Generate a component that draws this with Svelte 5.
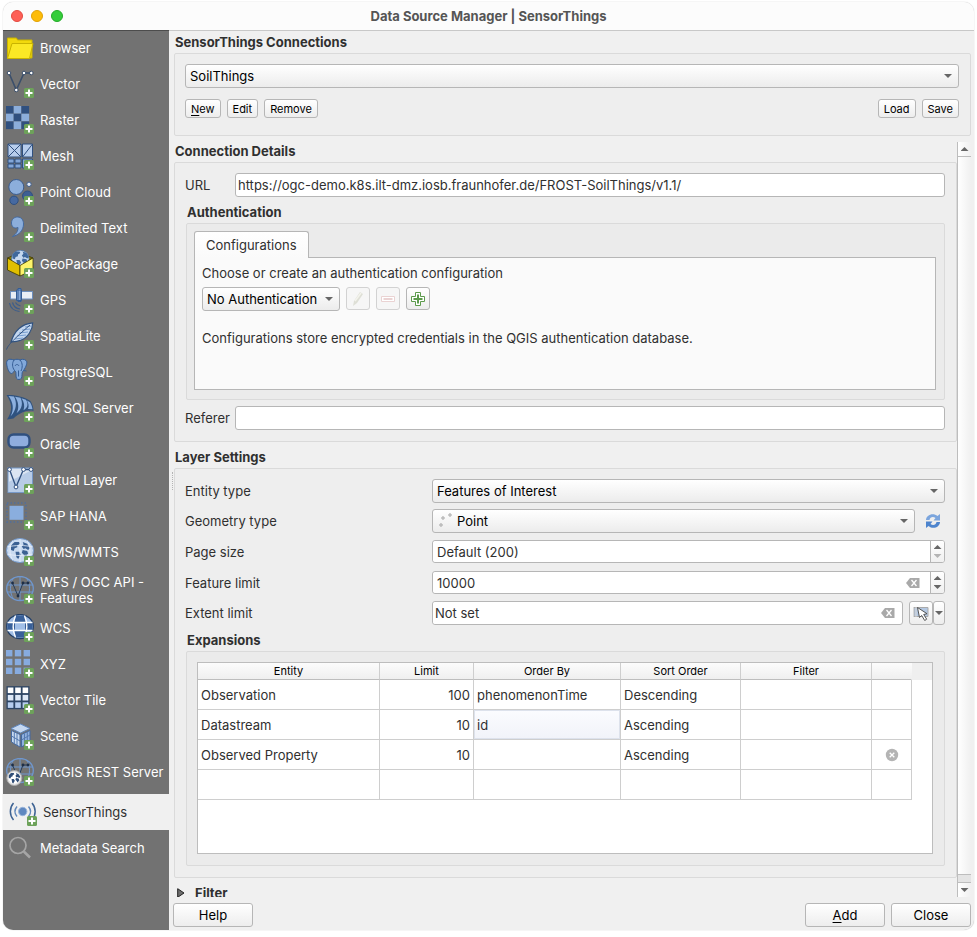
<script>
    const sources = [
        {label: 'Browser', icon: 'browser', plain: true},
        {label: 'Vector', icon: 'vector'},
        {label: 'Raster', icon: 'raster'},
        {label: 'Mesh', icon: 'mesh'},
        {label: 'Point Cloud', icon: 'points'},
        {label: 'Delimited Text', icon: 'comma'},
        {label: 'GeoPackage', icon: 'geopackage'},
        {label: 'GPS', icon: 'gps'},
        {label: 'SpatiaLite', icon: 'feather'},
        {label: 'PostgreSQL', icon: 'postgres'},
        {label: 'MS SQL Server', icon: 'mssql'},
        {label: 'Oracle', icon: 'oracle'},
        {label: 'Virtual Layer', icon: 'virtual'},
        {label: 'SAP HANA', icon: 'hana'},
        {label: 'WMS/WMTS', icon: 'wms'},
        {label: 'WFS / OGC API - Features', icon: 'wfs'},
        {label: 'WCS', icon: 'wcs'},
        {label: 'XYZ', icon: 'xyz'},
        {label: 'Vector Tile', icon: 'tile'},
        {label: 'Scene', icon: 'scene'},
        {label: 'ArcGIS REST Server', icon: 'arcgis'},
        {label: 'SensorThings', icon: 'sensor'},
        {label: 'Metadata Search', icon: 'search', plain: true}
    ]

    const expansions = [
        {entity: 'Observation', limit: 100, orderBy: 'phenomenonTime', sort: 'Descending'},
        {entity: 'Datastream', limit: 10, orderBy: 'id', sort: 'Ascending'},
        {entity: 'Observed Property', limit: 10, orderBy: '', sort: 'Ascending', removable: true},
        {entity: '', limit: '', orderBy: '', sort: ''}
    ]

    const thirds = [0, 1, 2]

    let current = $state('SensorThings')
    let url = $state('https://ogc-demo.k8s.ilt-dmz.iosb.fraunhofer.de/FROST-SoilThings/v1.1/')
    let referer = $state('')
    let pageSize = $state('Default (200)')
    let featureLimit = $state('10000')
    let extent = $state('Not set')
    let editing = $state('Datastream')

    function stepLimit(delta) {
        featureLimit = String(Math.max(0, (parseInt(featureLimit) || 0) + delta))
    }
</script>

{#snippet land(cx, cy, s)}
    <g transform="translate({cx} {cy}) scale({s})">
        <path d="M-10 -5l4 -4l5 0l1 2l-3 2l0 2l-3 1l-1 3l-3 -1zM-5 2l4 0l2 3l-3 5l-2 -2zM3 -9l5 2l3 5l-2 2l-3 -2l-2 1l-2 -3l2 -2zM3 0l5 1l1 3l-3 4l-2 -3l-2 -2z"/>
    </g>
{/snippet}

{#snippet sourceIcon(name)}
    {#if name === 'browser'}
        <path d="M1.500 24V4h9l1 2H26v18z" fill="#f2d90d" stroke="#c9b300"/>
        <path d="M1.500 24.500L6 9.500h21L23.500 24.500z" fill="#fbe825" stroke="#c9b300"/>
    {:else if name === 'vector'}
        <path d="M3 3L10.300 20L18 3h7.500" fill="none" stroke="#3b4f6b" stroke-width="1.600"/>
        {#each [[3, 3], [10.3, 20], [18, 3], [25.3, 3]] as [x, y]}
            <circle cx={x} cy={y} r="1.800" fill="#fff" stroke="#3b4f6b"/>
        {/each}
    {:else if name === 'raster'}
        {#each thirds as row}
            {#each thirds as col}
                <rect x={col * 7.7} y={row * 7.7} width="7.700" height="7.700" fill={(row + col) % 2 ? '#8caedb' : '#30507f'}/>
            {/each}
        {/each}
    {:else if name === 'mesh'}
        <g fill="#b7cdec" stroke="#30507f">
            <path d="M2 2h13v13H2zM2 2l13 13M15 2L2 15M16.500 2H26.500v13h-10zM26.500 2l-10 13"/>
            <path d="M2 17h6v4H2zM9 17h6v4H9zM2 22h6v4H2zM9 22h6v4H9zM16.500 17h10v9h-10z" fill="#82a6d8"/>
        </g>
    {:else if name === 'points'}
        <circle cx="21.500" cy="18" r="5" fill="#3d5f93" stroke="#30507f"/>
        <circle cx="10.300" cy="9" r="7.500" fill="#8caedb" stroke="#3b5c8e"/>
        <circle cx="23" cy="6.300" r="2.200" fill="#e4ecf7" stroke="#3b5c8e"/>
        <circle cx="8" cy="22.300" r="4.200" fill="#4669a0" stroke="#30507f"/>
    {:else if name === 'comma'}
        <path d="M6.500 22.500c4-2.500 5.500-5.500 5.500-9-3.500 1.500-6.500-.5-6.500-4.500 0-4 3-6 6-6 4 0 6 3 6 7 0 6-4 11-11 12.500z" fill="#8caedb" stroke="#43699f"/>
    {:else if name === 'geopackage'}
        <path d="M1.500 8L6 6h16l5 2-13 6z" fill="#8d7c00" stroke="#3d3800" stroke-width=".8"/>
        <circle cx="14.300" cy="9" r="8.800" fill="#c5d8ef" stroke="#4e79ae" stroke-width=".8"/>
        <g fill="#3f689b">{@render land(14.3, 8.5, .78)}</g>
        <path d="M1.500 8L14 15.500V26L1.500 20z" fill="#e0bf00" stroke="#3d3800" stroke-width=".8"/>
        <path d="M14 15.500L27 8v12L14 26z" fill="#fdf36b" stroke="#3d3800" stroke-width=".8"/>
    {:else if name === 'gps'}
        <path d="M3.500 17c1 5 4.500 8 10 8.500M6.500 16.500c1 4 3.500 6 7.500 6.500M9.500 16.500c1 2 2.500 3 5 3.500" fill="none" stroke="#3c5d8b" stroke-width="1.200"/>
        <path d="M4.500 5.500h6v7.500h-6zM15 5.500h11.500v7.500H15z" fill="#e9eef5" stroke="#6d8fbe"/>
        <path d="M10.500 4h5v10.500h-5zM12 2.500h3v13h-3z" fill="#89abda" stroke="#355d95"/>
    {:else if name === 'feather'}
        <path d="M5 20C8 10 15 2 26.700.8c0 7-5 15-12 17.500-4 1.500-6 1.500-9.700 1.700z" fill="#c4d7ef" stroke="#31527f" stroke-width="1.200"/>
        <path d="M9 17l8-1M11 14l9-1M13 11l9-1M16 8l8-1M19 5l6-1" stroke="#769dd0" fill="none"/>
        <path d="M.5 27.500C2 23 8 17 24 3" fill="none" stroke="#31527f"/>
    {:else if name === 'postgres'}
        <path d="M8 2C4 .5 0 1 .7 6c.5 5 3 10 5 9.500 1 0 2-2 2.800-3 1.500 1 1.500 2 1.500 4.500 0 3 .5 4.500 3 4.500s3-2 3-5c0-2 .5-3 1.500-4C20 9 22 4 20 2.500 18 .5 15 1.500 14 2c-2-1-4-1-6 0z" fill="#82a8d9" stroke="#355d95"/>
        <path d="M8 2C6 5 6 9 8.500 12.500M14 2c3 3 2.500 8 1 11M9 8c1-2 3-2 4 0M12.500 12.500v6M17.500 12.500l3 .5" fill="none" stroke="#355d95"/>
    {:else if name === 'mssql'}
        <path d="M.5 1c9-.5 18 2 24 6 2 3 3 7 3 10-6-1.500-13 1.500-20 7.500L1 25.500C7 17 6 9 .5 1z" fill="#2f527f"/>
        <path d="M2.500 2l5.500.5c3 6 3 13-3.500 20C8.500 15 7 8 2.500 2zM9 2.800l5.500 1c2.500 5 2 11-4 15.500C13.500 14 12.500 8 9 2.800zM15.500 4.300l4.500 1.500c2.500 4 2 8-2.500 10.500C19 12 18 8 15.500 4.300zM21 6.500l3 1.800c1.500 2.200 2.200 4.500 2.500 7L22 15c1.200-3 .5-5.500-1-8.500z" fill="#8cb0df"/>
    {:else if name === 'oracle'}
        <rect x="2.500" y="4.500" width="21" height="13" rx="5" fill="#8fadde" stroke="#30507f" stroke-width="2.400"/>
    {:else if name === 'virtual'}
        <rect x="2" y="2" width="24.500" height="24.500" fill="#dbe5f2" stroke="#7799c8"/>
        <path d="M2.500 26V16L26 4v22z" fill="#a9c2e3" opacity=".7"/>
        <path d="M3.500 3.500L10 21 17.500 3.500h7.500" fill="none" stroke="#30507f" stroke-width="1.300"/>
        {#each [[3.5, 3.5], [10, 21], [17.5, 3.5], [25, 3.5]] as [x, y]}
            <circle cx={x} cy={y} r="1.900" fill="#fff" stroke="#30507f"/>
        {/each}
    {:else if name === 'hana'}
        <path d="M1 1h19v19H1z" fill="none" stroke="#506f9d" stroke-width="1.500" stroke-dasharray="1.5 2"/>
        <rect x="3.500" y="3.800" width="14" height="14" fill="#8aaede"/>
    {:else if name === 'wms'}
        <ellipse cx="14" cy="12.500" rx="13.500" ry="12" fill="#c9daf0" stroke="#7399cb"/>
        <g fill="#3b6193">{@render land(14, 12, .9)}</g>
        <path d="M1 9c8-2 18-2 26 0M1 16c8 2 18 2 26 0M14 1v23M7 2.500c-4 6-4 14 0 20M21 2.500c4 6 4 14 0 20" fill="none" stroke="#e6eef9" stroke-width=".8"/>
    {:else if name === 'wfs' || name === 'arcgis'}
        <g fill="none" stroke="#6f97ce">
            <ellipse cx="14" cy="12.500" rx="13.300" ry="12" stroke-width="1.300"/>
            <path d="M14 .5v24M1 9h26M1 16h26M7.500 2c-4 6-4 15 0 21M20.500 2c4 6 4 15 0 21"/>
        </g>
        <path d="M6.500 7l5.500 13 5-13h5" fill="none" stroke="#263c5a"/>
        {#each [[6.5, 7], [12, 20], [17, 7], [22, 7]] as [x, y]}
            <circle cx={x} cy={y} r="1.400" fill="#1d2e47"/>
        {/each}
        {#if name === 'arcgis'}
            <circle cx="8.300" cy="20" r="7.500" fill="#e4e4e4" stroke="#aaa"/>
            <circle cx="8.300" cy="20" r="5.700" fill="#fff"/>
            <g fill="#2f4d77">{@render land(8.3, 20, .55)}</g>
        {/if}
    {:else if name === 'wcs'}
        <ellipse cx="14" cy="12.500" rx="13.300" ry="12" fill="#a2bfe7" stroke="#233f66" stroke-width="1.300"/>
        <path d="M1.500 9h7.500v7H1.500zM19 9h7.500v7H19zM10 1.500h8L19.500 8h-11zM8.500 17h11L18 23.500h-8z" fill="#396099"/>
        <path d="M1.500 8.500h25M1.500 16.500h25M9.500 1.500c-3 7-3 15 0 22M18.500 1.500c3 7 3 15 0 22" fill="none" stroke="#fff" stroke-width="1.300"/>
    {:else if name === 'xyz'}
        {#each thirds as row}
            {#each thirds as col}
                <rect x={col * 8.8} y={row * 8.8} width="6.400" height="6.400" fill="#87abdf"/>
            {/each}
        {/each}
    {:else if name === 'tile'}
        <rect x=".5" y=".2" width="23" height="23" fill="#2d4564"/>
        {#each thirds as row}
            {#each thirds as col}
                <rect x={1.8 + col * 7.4} y={1.5 + row * 7.4} width="5.600" height="5.600" fill={['#fff', '#dde8f7', '#b6cdee'][row]}/>
            {/each}
        {/each}
    {:else if name === 'scene'}
        <path d="M5 6.500L14.500 2 24 6.500 14.500 11z" fill="#c5d8f1" stroke="#5e87bf"/>
        <path d="M5.500 8.500l8.500 4V25l-8.500-5z" fill="#c7d9f0" stroke="#44699f"/>
        <path d="M15.500 12.500l8.500-4V20l-8.500 5z" fill="#8fb0de" stroke="#44699f"/>
        <path d="M8.300 10v11.500M11 11v12.500M5.500 14l8.500 5M18.500 11.500V23M21.300 10v11.500M15.500 18l8.500-5" stroke="#557ab0" fill="none"/>
    {:else if name === 'sensor'}
        <circle cx="13.700" cy="13.500" r="4.200" fill="#5f88c0" stroke="#9ab6dc"/>
        <g fill="none" stroke="#3f6494" stroke-width="1.500">
            <path d="M8 8.500c-2.500 3-2.500 7 0 10M19.500 8.500c2.500 3 2.500 7 0 10" stroke="#6389bb"/>
            <path d="M4.500 5C.3 10 .3 17 4.500 22M23 5c4.200 5 4.200 12 0 17"/>
        </g>
    {:else if name === 'search'}
        <g fill="none" stroke="#a5a5a5">
            <circle cx="12" cy="11.500" r="8" stroke-width="1.700"/>
            <path d="M17.800 17.500L24 23.500" stroke-width="2.600"/>
        </g>
    {/if}
{/snippet}

{#snippet eraser()}
    <svg width="14" height="10" viewBox="0 0 14 10" aria-hidden="true">
        <path d="M0 5l4-5h9.500v10H4z" fill="#a9a9a9"/>
        <path d="M5.500 2l5 6M10.500 2l-5 6" stroke="#fff" stroke-width="1.300"/>
    </svg>
{/snippet}

<div class="desktop">
    <div class="window">
        <header class="titlebar">
            <div class="lights">
                <button type="button" class="light red" aria-label="Close window"></button>
                <button type="button" class="light yellow" aria-label="Minimize"></button>
                <button type="button" class="light green" aria-label="Zoom"></button>
            </div>
            <h1>Data Source Manager | SensorThings</h1>
        </header>

        <div class="body">
            <nav>
                {#each sources as source}
                    <button type="button" class="source" class:selected={current === source.label}
                            onclick={() => current = source.label}>
                        <svg width="28" height="28" viewBox="0 0 28 28" aria-hidden="true">
                            {@render sourceIcon(source.icon)}
                            {#if !source.plain}
                                <rect x="18" y="18" width="10" height="10" rx="1.500" fill="#6da25a"/>
                                <path d="M23 19.500v7M19.500 23h7" stroke="#fff" stroke-width="2"/>
                            {/if}
                        </svg>
                        <span>{source.label}</span>
                    </button>
                {/each}
            </nav>

            <div class="content">
                <div class="splitter"><i></i></div>

                <main>
                    <section>
                        <h2>SensorThings Connections</h2>
                        <div class="group connections">
                            <div class="combo">
                                <select aria-label="Connection">
                                    <option>SoilThings</option>
                                </select>
                            </div>
                            <div class="actions">
                                <button type="button" class="btn small"><u>N</u>ew</button>
                                <button type="button" class="btn small">Edit</button>
                                <button type="button" class="btn small">Remove</button>
                                <span class="spacer"></span>
                                <button type="button" class="btn small">Load</button>
                                <button type="button" class="btn small">Save</button>
                            </div>
                        </div>
                    </section>

                    <div class="scroll">
                        <div class="view">
                            <section>
                                <h2>Connection Details</h2>
                                <div class="group">
                                    <div class="line">
                                        <label for="url">URL</label>
                                        <input id="url" type="text" bind:value={url}>
                                    </div>

                                    <div class="nested">
                                        <h3>Authentication</h3>
                                        <div class="group auth">
                                            <button type="button" class="tab">Configurations</button>
                                            <div class="panel">
                                                <label for="config">Choose or create an authentication configuration</label>
                                                <div class="config">
                                                    <div class="combo compact">
                                                        <select id="config">
                                                            <option>No Authentication</option>
                                                        </select>
                                                    </div>
                                                    <button type="button" class="btn tool" disabled aria-label="Edit configuration">
                                                        <svg width="16" height="16" viewBox="0 0 16 16">
                                                            <path d="M3 15l1-5 6-9 3 2-6 9z" fill="#dedfd6"/>
                                                            <path d="M5 10l6-8" stroke="#f3f3ec" stroke-width="1.500"/>
                                                        </svg>
                                                    </button>
                                                    <button type="button" class="btn tool" disabled aria-label="Remove configuration">
                                                        <svg width="16" height="16" viewBox="0 0 16 16">
                                                            <path d="M1.500 5.500h13v5h-13z" fill="#fff" stroke="#ead3d3"/>
                                                            <path d="M3.500 8h9" stroke="#ead3d3" stroke-width="2"/>
                                                        </svg>
                                                    </button>
                                                    <button type="button" class="btn tool" aria-label="Add configuration">
                                                        <svg width="16" height="16" viewBox="0 0 16 16">
                                                            <path d="M5.500 1.500h5v4h4v5h-4v4h-5v-4h-4v-5h4z" fill="#fff" stroke="#5c9a4b"/>
                                                            <path d="M8 3.500v9M3.500 8h9" stroke="#5c9a4b" stroke-width="2"/>
                                                        </svg>
                                                    </button>
                                                </div>
                                                <p>Configurations store encrypted credentials in the QGIS authentication database.</p>
                                            </div>
                                        </div>
                                    </div>

                                    <div class="line">
                                        <label for="referer">Referer</label>
                                        <input id="referer" type="text" bind:value={referer}>
                                    </div>
                                </div>
                            </section>

                            <section>
                                <h2>Layer Settings</h2>
                                <div class="group">
                                    <div class="settings">
                                        <label for="entity">Entity type</label>
                                        <div class="combo">
                                            <select id="entity">
                                                <option>Features of Interest</option>
                                            </select>
                                        </div>

                                        <label for="geometry">Geometry type</label>
                                        <div class="field">
                                            <div class="combo with-icon">
                                                <select id="geometry">
                                                    <option>Point</option>
                                                </select>
                                                <svg width="16" height="16" viewBox="0 0 16 16" fill="#fff" stroke="#8a8a8a" stroke-width=".8" aria-hidden="true">
                                                    <circle cx="3" cy="12" r="1.200"/>
                                                    <circle cx="5" cy="5" r="1.200"/>
                                                    <circle cx="12" cy="2" r="1.200"/>
                                                </svg>
                                            </div>
                                            <button type="button" class="refresh" aria-label="Refresh">
                                                <svg width="16" height="16" viewBox="0 0 16 16">
                                                    <path d="M1 7C1 2 8-1 12.500 3L15 1v6.500H8.500L10.500 5C8 3 5 4 4.500 7z" fill="#7ba5dd"/>
                                                    <path d="M15 9c0 5-7 8-11.500 4L1 15V8.500h6.500L5.500 11C8 13 11 12 11.500 9z" fill="#4d84cd"/>
                                                </svg>
                                            </button>
                                        </div>

                                        <label for="page-size">Page size</label>
                                        <div class="spin">
                                            <input id="page-size" type="text" bind:value={pageSize}>
                                            <div class="steps">
                                                <button type="button" class="up" aria-label="Increase"></button>
                                                <button type="button" class="down" disabled aria-label="Decrease"></button>
                                            </div>
                                        </div>

                                        <label for="feature-limit">Feature limit</label>
                                        <div class="spin">
                                            <input id="feature-limit" type="text" bind:value={featureLimit}>
                                            <button type="button" class="clear" aria-label="Clear feature limit" onclick={() => featureLimit = ''}>
                                                {@render eraser()}
                                            </button>
                                            <div class="steps">
                                                <button type="button" class="up" aria-label="Increase" onclick={() => stepLimit(1)}></button>
                                                <button type="button" class="down" aria-label="Decrease" onclick={() => stepLimit(-1)}></button>
                                            </div>
                                        </div>

                                        <label for="extent">Extent limit</label>
                                        <div class="field">
                                            <div class="clearable">
                                                <input id="extent" type="text" bind:value={extent}>
                                                <button type="button" class="clear" aria-label="Clear extent" onclick={() => extent = ''}>
                                                    {@render eraser()}
                                                </button>
                                            </div>
                                            <div class="split">
                                                <button type="button" class="btn tool tall" aria-label="Set extent">
                                                    <svg width="16" height="16" viewBox="0 0 16 16">
                                                        <path d="M1 2.500h14v9H1z" fill="#b4c8e2" stroke="#aaa"/>
                                                        <path d="M.5 2v10M3 2v10" stroke="#d8d8d8"/>
                                                        <path d="M4.500 2.500l2 10 2.200-2 3 5 2-1.300-3-4.700 3.300-.8z" fill="#fff" stroke="#444" stroke-width=".9"/>
                                                    </svg>
                                                </button>
                                                <button type="button" class="btn drop" aria-label="Extent options"></button>
                                            </div>
                                        </div>
                                    </div>

                                    <div class="nested">
                                        <h3>Expansions</h3>
                                        <div class="group">
                                            <div class="table-view">
                                                <table>
                                                    <colgroup>
                                                        <col class="c-entity"><col class="c-limit"><col class="c-order">
                                                        <col class="c-sort"><col class="c-filter"><col class="c-remove"><col>
                                                    </colgroup>
                                                    <thead>
                                                        <tr>
                                                            <th>Entity</th>
                                                            <th>Limit</th>
                                                            <th>Order By</th>
                                                            <th>Sort Order</th>
                                                            <th>Filter</th>
                                                            <th class="last"></th>
                                                            <th class="rest"></th>
                                                        </tr>
                                                    </thead>
                                                    <tbody>
                                                        {#each expansions as row}
                                                            <tr>
                                                                <td>{row.entity}</td>
                                                                <td class="number">{row.limit}</td>
                                                                <td class:editing={row.entity === editing}>{row.orderBy}</td>
                                                                <td>{row.sort}</td>
                                                                <td></td>
                                                                <td class="remove">
                                                                    {#if row.removable}
                                                                        <button type="button" aria-label="Remove expansion">
                                                                            <svg width="14" height="14" viewBox="0 0 14 14">
                                                                                <circle cx="7" cy="7" r="6.200" fill="#b4b4b4"/>
                                                                                <path d="M4.700 4.700l4.600 4.600M9.300 4.700L4.700 9.300" stroke="#fff" stroke-width="1.300"/>
                                                                            </svg>
                                                                        </button>
                                                                    {/if}
                                                                </td>
                                                                <td class="rest"></td>
                                                            </tr>
                                                        {/each}
                                                    </tbody>
                                                </table>
                                            </div>
                                        </div>
                                    </div>
                                </div>
                            </section>

                            <button type="button" class="disclosure">
                                <svg width="8" height="10" viewBox="0 0 8 10" aria-hidden="true">
                                    <path d="M.7 .7v8.600L7 5z" fill="#6e6e6e" stroke="#222"/>
                                </svg>
                                Filter
                            </button>
                        </div>

                        <div class="scrollbar">
                            <button type="button" class="up" aria-label="Scroll up"></button>
                            <div class="handle"></div>
                            <div class="groove"></div>
                            <button type="button" class="down" aria-label="Scroll down"></button>
                        </div>
                    </div>

                    <footer>
                        <button type="button" class="btn">Help</button>
                        <span class="spacer"></span>
                        <button type="button" class="btn"><u>A</u>dd</button>
                        <button type="button" class="btn">Close</button>
                    </footer>
                </main>
            </div>
        </div>
    </div>
</div>

<style>
    :global(body) {
        background: #fff;
    }

    .desktop, .desktop * {
        box-sizing: border-box;
    }

    .desktop {
        height: 100vh;
        padding: 2px 3px 7px;
        font: 13px/16px Inter, "Liberation Sans", sans-serif;
        color: #303030;
    }

    button, input, select {
        margin: 0;
        padding: 0;
        border: 0;
        background: none;
        font: inherit;
        color: inherit;
        outline: none;
        appearance: none;
    }

    h1, h2, h3, p {
        margin: 0;
        font-size: 13px;
        line-height: 16px;
    }

    .window {
        height: 100%;
        display: flex;
        flex-direction: column;
        overflow: hidden;
        border-radius: 10px;
        background: #f0f0f0;
        box-shadow: 0 0 1px rgba(0, 0, 0, 0.35);
    }

    .titlebar {
        flex: none;
        display: grid;
        grid-template-columns: 1fr auto 1fr;
        align-items: center;
        height: 28px;
        padding: 0 8px;
        background: #fcfcfc;
    }

    .titlebar h1 {
        color: #555;
        font-weight: 700;
    }

    .lights {
        display: flex;
        gap: 8px;
    }

    .light {
        width: 12px;
        height: 12px;
        border-radius: 50%;
    }

    .red {
        background: #fe6057;
        border: 1px solid #e24b41;
    }

    .yellow {
        background: #fdbc08;
        border: 1px solid #e0a106;
    }

    .green {
        background: #35cd3b;
        border: 1px solid #24ab28;
    }

    .body {
        flex: 1;
        min-height: 0;
        display: flex;
    }

    .content {
        flex: 1;
        min-width: 0;
        display: flex;
        border-top: 1px solid #c8c8c8;
    }

    nav {
        flex: none;
        width: 166px;
        background: #727272;
        box-shadow: inset 0 1px #4c4c4c;
    }

    .source {
        display: flex;
        align-items: center;
        gap: 6px;
        width: 100%;
        min-height: 36px;
        padding: 0 3px;
        color: #fff;
        text-align: left;
    }

    .source svg {
        flex: none;
    }

    .source.selected {
        margin-top: 4px;
        padding-left: 6px;
        background: #f0f0f0;
        color: #303030;
    }

    .source:nth-child(16) {
        min-height: 40px;
    }

    .splitter {
        flex: none;
        display: flex;
        align-items: center;
        justify-content: flex-end;
        width: 4px;
    }

    .splitter i {
        height: 18px;
        border-left: 1px dotted #b4b4b4;
    }

    main {
        flex: 1;
        min-width: 0;
        display: flex;
        flex-direction: column;
        gap: 6px;
        padding: 3px 3px 3px 0;
    }

    section {
        padding-left: 1px;
    }

    h2, h3 {
        padding: 0 1px;
        margin-bottom: 3px;
        font-weight: 700;
    }

    .group {
        padding: 10px 11px 11px 10px;
        border: 1px solid #dadada;
        border-radius: 2px;
        background: #eee;
    }

    .connections {
        padding-bottom: 17px;
    }

    .combo {
        display: grid;
        align-items: center;
    }

    .combo::after {
        content: "";
        grid-area: 1 / 1;
        justify-self: end;
        width: 8px;
        height: 4px;
        margin-right: 7px;
        background: #666;
        clip-path: polygon(0 0, 100% 0, 50% 100%);
        pointer-events: none;
    }

    .combo select {
        grid-area: 1 / 1;
        width: 100%;
        height: 24px;
        padding: 0 24px 0 4px;
        border: 1px solid #b6b6b6;
        border-radius: 3px;
        background: linear-gradient(#fff, #ececec);
        color: #000;
    }

    .combo.compact select {
        padding-right: 21px;
    }

    .combo svg {
        grid-area: 1 / 1;
        margin-left: 6px;
        pointer-events: none;
    }

    .combo.with-icon select {
        padding-left: 24px;
    }

    .actions, footer {
        display: flex;
        gap: 6px;
    }

    .actions {
        margin-top: 11px;
    }

    .spacer {
        flex: 1;
    }

    .btn {
        min-width: 80px;
        height: 24px;
        border: 1px solid #b6b6b6;
        border-radius: 3px;
        background: linear-gradient(#fff, #ededed);
        color: #000;
    }

    .btn u {
        text-underline-offset: 2px;
    }

    .btn.small {
        min-width: 0;
        height: 19px;
        padding: 0 5px;
        font-size: 11px;
        line-height: 16px;
    }

    .btn.tool {
        display: grid;
        place-items: center;
        min-width: 0;
        width: 24px;
        height: 23px;
    }

    .btn.tall {
        height: 24px;
    }

    .btn.tool:disabled {
        border-color: #d2d2d2;
        background: #f6f6f6;
    }

    .scroll {
        flex: 1;
        min-height: 0;
        display: flex;
    }

    .view {
        flex: 1;
        min-width: 0;
        overflow: hidden;
        padding-top: 1px;
    }

    .view section {
        margin-bottom: 7px;
    }

    .line {
        display: grid;
        grid-template-columns: 50px 1fr;
        align-items: center;
    }

    input {
        width: 100%;
        height: 24px;
        padding: 0 2px;
        border: 1px solid #b6b6b6;
        border-radius: 3px;
        background: #fff;
    }

    .nested {
        margin: 7px 0 0 1px;
    }

    .nested + .line {
        margin-top: 6px;
    }

    .nested .group {
        background: #ebebeb;
    }

    .nested .auth {
        padding: 7px 8px 9px 7px;
    }

    .tab {
        display: block;
        position: relative;
        height: 27px;
        padding: 0 11px;
        border: 1px solid #b6b6b6;
        border-bottom: 0;
        border-radius: 3px 3px 0 0;
        background: linear-gradient(#fff, #fafafa);
    }

    .panel {
        min-height: 133px;
        margin-top: -1px;
        padding: 7px;
        border: 1px solid #b6b6b6;
        background: #fafafa;
    }

    .panel label {
        display: block;
    }

    .config {
        display: flex;
        gap: 6px;
        margin: 6px 0 19px;
    }

    .settings {
        display: grid;
        grid-template-columns: 241px 1fr;
        align-items: center;
        gap: 6px;
    }

    .field {
        display: flex;
        gap: 6px;
    }

    .field .combo {
        flex: 1;
    }

    .refresh {
        display: grid;
        place-items: center;
        width: 24px;
    }

    .spin {
        display: flex;
        align-items: center;
        height: 23px;
        margin: 1px 0;
        border: 1px solid #b6b6b6;
        border-radius: 3px;
        background: #fff;
        overflow: hidden;
    }

    .spin input {
        flex: 1;
        height: 21px;
        padding: 0 4px;
        border: 0;
    }

    .clear {
        display: grid;
        place-items: center;
        width: 14px;
        height: 16px;
    }

    .spin .clear {
        margin-right: 10px;
    }

    .steps {
        flex: none;
        display: flex;
        flex-direction: column;
        justify-content: center;
        width: 14px;
        height: 21px;
        border-left: 1px solid #b6b6b6;
        background: linear-gradient(#fff, #f0f0f0);
    }

    .steps button, .scrollbar button, .drop {
        display: grid;
        place-items: center;
    }

    .steps button {
        height: 9px;
    }

    .up::before, .down::before, .drop::before {
        content: "";
        width: 8px;
        height: 4px;
        background: #666;
        clip-path: polygon(0 0, 100% 0, 50% 100%);
    }

    .up::before {
        clip-path: polygon(0 100%, 100% 100%, 50% 0);
    }

    .down:disabled::before {
        background: #b4b4b4;
    }

    .clearable {
        flex: 1;
        display: flex;
        align-items: center;
        height: 24px;
        padding-right: 7px;
        border: 1px solid #b6b6b6;
        border-radius: 3px;
        background: #fff;
    }

    .clearable input {
        height: 22px;
        border: 0;
    }

    .split {
        display: flex;
    }

    .btn.drop {
        min-width: 0;
        width: 12px;
    }

    .table-view {
        min-height: 192px;
        border: 1px solid #bdbdbd;
        background: #fff;
    }

    table {
        width: 100%;
        table-layout: fixed;
        border-spacing: 0;
    }

    .c-entity {
        width: 182px;
    }

    .c-limit {
        width: 94px;
    }

    .c-order {
        width: 147px;
    }

    .c-sort {
        width: 120px;
    }

    .c-filter {
        width: 131px;
    }

    .c-remove {
        width: 40px;
    }

    th, td {
        padding: 0 3px;
        border-right: 1px solid #cecece;
        border-bottom: 1px solid #cecece;
        overflow: hidden;
        white-space: nowrap;
    }

    th {
        height: 17px;
        border-bottom-color: #bdbdbd;
        background: linear-gradient(#fcfcfc, #efefef);
        color: #000;
        font-size: 11px;
        font-weight: 400;
        line-height: 16px;
    }

    td {
        height: 30px;
    }

    th.last {
        border-right-color: transparent;
    }

    th.rest, td.rest {
        border: 0;
    }

    th.rest {
        background: #efefef;
    }

    .number {
        text-align: right;
    }

    .editing {
        background: linear-gradient(#fbfcff, #f1f3f9);
        box-shadow: inset 0 0 0 1px #dde2ec;
    }

    .remove {
        line-height: 14px;
        text-align: center;
    }

    .remove button {
        display: inline-grid;
        vertical-align: top;
    }

    .disclosure {
        display: flex;
        align-items: center;
        gap: 10px;
        padding: 0 4px;
        font-weight: 700;
    }

    .scrollbar {
        flex: none;
        display: flex;
        flex-direction: column;
        width: 14px;
        border-left: 1px solid #bdbdbd;
        background: linear-gradient(90deg, #fff, #f0f0f0);
    }

    .scrollbar button {
        height: 14px;
    }

    .handle {
        flex: 1;
        border: 1px solid #bdbdbd;
        border-width: 1px 0;
    }

    .groove {
        height: 8px;
        border-bottom: 1px solid #bdbdbd;
        background: #e4e4e4;
    }
</style>
